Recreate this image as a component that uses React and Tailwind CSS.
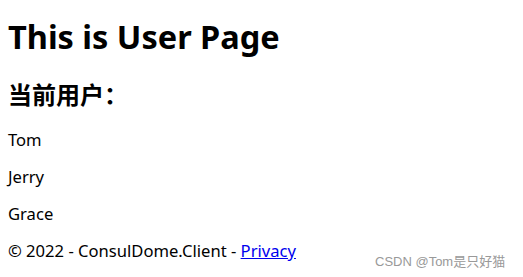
export default function App() {
  return (
    <div className="relative h-[277px] w-[523px] bg-white text-black [font-family:'Noto_Sans','Noto_Sans_CJK_SC',sans-serif]">
      <div className="px-2">
        <h1 className="pt-[15px] text-[32.5px] font-bold leading-[44px]">This is User Page</h1>
        <h2 className="mt-[20px] text-[24px] font-bold leading-[32px]">当前用户：</h2>
        <div className="mt-[18px] flex flex-col gap-4 text-[16.6px] leading-[21px]">
          <p>Tom</p>
          <p>Jerry</p>
          <p>Grace</p>
          <p>
            © 2022 - ConsulDome.Client -{" "}
            <a href="#" className="text-[#0000ee] underline">Privacy</a>
          </p>
        </div>
      </div>
      <div className="absolute left-[375px] top-[252px] text-[13px] text-[#999999] [font-family:'Liberation_Sans','Noto_Sans_CJK_SC',sans-serif]">
        CSDN @Tom是只好猫
      </div>
    </div>
  );
}
